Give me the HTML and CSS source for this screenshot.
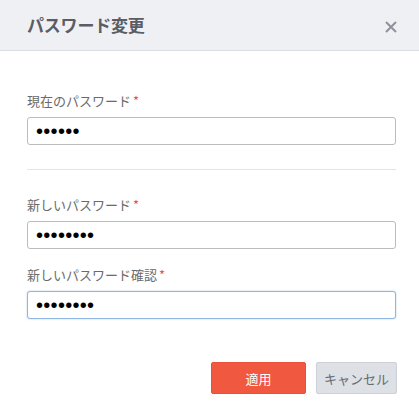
FILE: index.html
```html
<!DOCTYPE html>
<html lang="ja">
<head>
<meta charset="utf-8">
<title>パスワード変更</title>
<link rel="stylesheet" href="styles.css">
</head>
<body>
<div class="modal">
  <header class="modal-header">
    <h1 class="modal-title">パスワード変更</h1>
    <button class="close" type="button" aria-label="閉じる">
      <svg width="12" height="12" viewBox="0 0 12 12"><path d="M1 1L11 11M11 1L1 11" stroke="#8f929b" stroke-width="2" fill="none"/></svg>
    </button>
  </header>
  <form class="modal-body">
    <div class="section">
      <div class="field">
        <label class="label">現在のパスワード<span class="req">*</span></label>
        <input class="input" type="password" value="123456">
      </div>
    </div>
    <hr class="divider">
    <div class="section">
      <div class="field">
        <label class="label">新しいパスワード<span class="req">*</span></label>
        <input class="input" type="password" value="12345678">
      </div>
      <div class="field">
        <label class="label">新しいパスワード確認<span class="req">*</span></label>
        <input class="input is-focused" type="password" value="12345678" autofocus>
      </div>
    </div>
    <div class="actions">
      <button class="btn btn-primary" type="button">適用</button>
      <button class="btn btn-default" type="button">キャンセル</button>
    </div>
  </form>
</div>
</body>
</html>
```

FILE: styles.css
```css
* { box-sizing: border-box; }
html, body { margin: 0; padding: 0; background: #fff; }
body {
  font-family: "Noto Sans CJK JP", "Noto Sans", "Liberation Sans", sans-serif;
  width: 419px;
  height: 411px;
  overflow: hidden;
}
.modal-header {
  height: 51px;
  background: #eff0f4;
  border-bottom: 1px solid #dcdde2;
  display: flex;
  align-items: center;
  justify-content: space-between;
  padding: 0 21px 0 27px;
}
.modal-title {
  margin: 0;
  font-size: 17px;
  font-weight: bold;
  color: #5b5d64;
  line-height: 20px;
  letter-spacing: -0.2px;
}
.close {
  border: 0;
  background: none;
  padding: 0;
  width: 14px;
  height: 14px;
  display: flex;
  align-items: center;
  justify-content: center;
  margin-top: 4px;
}
.modal-body {
  padding: 41px 23px 0 27px;
}
.field {
  display: flex;
  flex-direction: column;
  gap: 7px;
}
.field + .field { margin-top: 17px; }
.label {
  font-size: 13px;
  line-height: 18px;
  color: #6a6a6a;
}
.req {
  color: #e8563f;
  margin-left: 2px;
}
.input {
  height: 28px;
  border: 1px solid #bcbcbc;
  border-radius: 3px;
  padding: 0 8px;
  font-family: "Liberation Sans", sans-serif;
  font-size: 20px;
  color: #000;
  outline: none;
  background: #fff;
  letter-spacing: 0.3px;
}
.input.is-focused {
  border-color: #8fb6e3;
  box-shadow: 0 0 2px rgba(120, 170, 230, 0.6);
}
.divider {
  border: 0;
  border-top: 1px solid #e4e4e6;
  margin: 24px 0 26px;
}
.actions {
  display: flex;
  justify-content: flex-end;
  gap: 10px;
  margin-top: 43px;
  margin-right: -1px;
}
.btn {
  height: 32px;
  border-radius: 2px;
  font-family: "Noto Sans CJK JP", "Noto Sans", sans-serif;
  font-size: 13px;
  padding: 0;
}
.btn-primary {
  width: 95px;
  background: #f0583f;
  border: 1px solid #ea5139;
  color: #fff;
}
.btn-default {
  width: 81px;
  background: #dde0e5;
  border: 1px solid #cdd0d6;
  color: #666a72;
}
```
